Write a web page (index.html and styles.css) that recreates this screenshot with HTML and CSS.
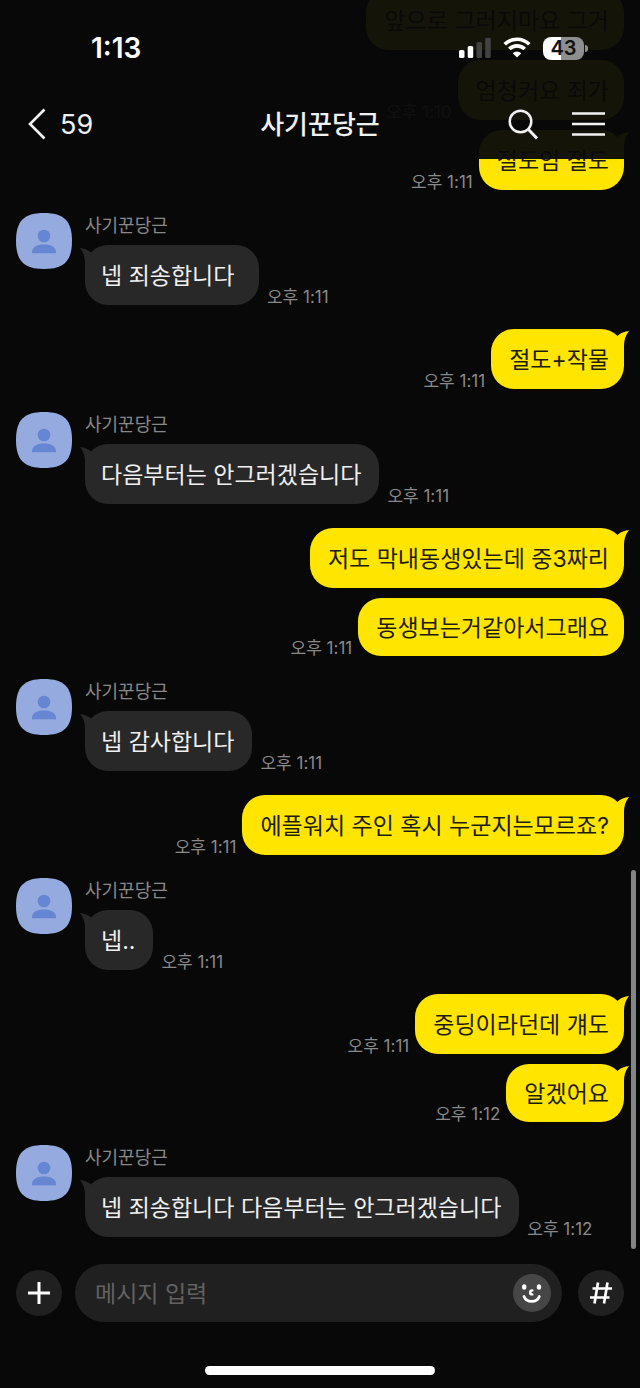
FILE: index.html
```html
<!DOCTYPE html>
<html lang="ko">
<head>
<meta charset="utf-8">
<meta name="viewport" content="width=device-width, initial-scale=1">
<title>사기꾼당근</title>
<link rel="stylesheet" href="styles.css">
</head>
<body>
<svg class="defs" aria-hidden="true">
  <symbol id="tail-right" viewBox="0 0 17 20"><path d="M5.700 4.700Q10.500 0.500 17 0Q12 6 12 15V20H0V8Z"/></symbol>
  <symbol id="tail-left" viewBox="0 0 17 20"><path d="M11.300 4.700Q6.500 0.500 0 0Q5 6 5 15V20H17V8Z"/></symbol>
  <symbol id="avatar" viewBox="0 0 56 56">
    <path fill="#95aade" d="M28 0C48 0 56 8 56 28S48 56 28 56 0 48 0 28 8 0 28 0Z"/>
    <circle cx="28" cy="23" r="6.300" fill="#6685d2"/>
    <path fill="#6685d2" d="M16 40.200V39C16 34 21 31.500 28 31.500S40 34 40 39V40.200Z"/>
  </symbol>
</svg>

<header class="top">
  <div class="status">
    <span class="clock">1:13</span>
    <div class="indicators">
      <svg width="32" height="22" viewBox="0 0 32 22" fill="#fff">
        <rect x="0" y="13" width="5.500" height="8" rx="1.500"/>
        <rect x="8.700" y="9" width="5.500" height="12" rx="1.500"/>
        <rect x="17.500" y="5" width="5.500" height="16" rx="1.500" fill="#424242"/>
        <rect x="26.200" y="0.800" width="5.500" height="20.200" rx="1.500" fill="#424242"/>
      </svg>
      <svg width="28" height="22" viewBox="0 0 28 22">
        <g fill="none" stroke="#fff" stroke-width="3.600">
          <path d="M1.700 7.300A17.500 17.500 0 0 1 26.300 7.300"/>
          <path d="M6.300 12A11 11 0 0 1 21.700 12"/>
        </g>
        <path fill="#fff" d="M9.700 16.200A6.200 6.200 0 0 1 18.300 16.200L14 20.600Z"/>
      </svg>
      <div class="battery"><span class="battery-level">43</span><i class="battery-tip"></i></div>
    </div>
  </div>
  <nav class="nav">
    <button class="back" type="button" aria-label="뒤로, 59">
      <svg width="18" height="32" viewBox="0 0 18 32"><path d="M16.500 1.500L2 16L16.500 30.500" fill="none" stroke="#f2f2f2" stroke-width="2.600"/></svg>
      <span>59</span>
    </button>
    <h1 class="title">사기꾼당근</h1>
    <div class="tools">
      <button type="button" aria-label="검색">
        <svg width="30" height="32" viewBox="0 0 30 32" fill="none" stroke="#f2f2f2"><circle cx="12.500" cy="13.500" r="10.800" stroke-width="2.500"/><path d="M20 21L29 30.500" stroke-width="3"/></svg>
      </button>
      <button type="button" aria-label="메뉴">
        <svg width="33" height="32" viewBox="0 0 33 32"><path d="M0 5.500H33M0 16H33M0 26.500H33" fill="none" stroke="#f2f2f2" stroke-width="2.600"/></svg>
      </button>
    </div>
  </nav>
</header>

<main class="chat">
  <section class="sent">
    <div class="line"><p class="bubble">앞으로 그러지마요 그거</p></div>
    <div class="line"><time>오후 1:10</time><p class="bubble">엄청커요 죄가</p></div>
    <div class="line"><time>오후 1:11</time><p class="bubble">절도임 절도<svg class="tail"><use href="#tail-right"/></svg></p></div>
  </section>
  <section class="received">
    <svg class="avatar"><use href="#avatar"/></svg>
    <div class="body"><h2 class="name">사기꾼당근</h2>
      <div class="line"><p class="bubble">넵 죄송합니다&nbsp;<svg class="tail"><use href="#tail-left"/></svg></p><time>오후 1:11</time></div></div>
  </section>
  <section class="sent">
    <div class="line"><time>오후 1:11</time><p class="bubble">절도+작물<svg class="tail"><use href="#tail-right"/></svg></p></div>
  </section>
  <section class="received">
    <svg class="avatar"><use href="#avatar"/></svg>
    <div class="body"><h2 class="name">사기꾼당근</h2>
      <div class="line"><p class="bubble">다음부터는 안그러겠습니다<svg class="tail"><use href="#tail-left"/></svg></p><time>오후 1:11</time></div></div>
  </section>
  <section class="sent">
    <div class="line"><p class="bubble">저도 막내동생있는데 중3짜리<svg class="tail"><use href="#tail-right"/></svg></p></div>
    <div class="line"><time>오후 1:11</time><p class="bubble short">동생보는거같아서그래요</p></div>
  </section>
  <section class="received">
    <svg class="avatar"><use href="#avatar"/></svg>
    <div class="body"><h2 class="name">사기꾼당근</h2>
      <div class="line"><p class="bubble">넵 감사합니다<svg class="tail"><use href="#tail-left"/></svg></p><time>오후 1:11</time></div></div>
  </section>
  <section class="sent">
    <div class="line"><time>오후 1:11</time><p class="bubble">에플워치 주인 혹시 누군지는모르죠?<svg class="tail"><use href="#tail-right"/></svg></p></div>
  </section>
  <section class="received">
    <svg class="avatar"><use href="#avatar"/></svg>
    <div class="body"><h2 class="name">사기꾼당근</h2>
      <div class="line"><p class="bubble">넵..<svg class="tail"><use href="#tail-left"/></svg></p><time>오후 1:11</time></div></div>
  </section>
  <section class="sent">
    <div class="line"><time>오후 1:11</time><p class="bubble">중딩이라던데 걔도<svg class="tail"><use href="#tail-right"/></svg></p></div>
    <div class="line"><time>오후 1:12</time><p class="bubble short">알겠어요<svg class="tail"><use href="#tail-right"/></svg></p></div>
  </section>
  <section class="received">
    <svg class="avatar"><use href="#avatar"/></svg>
    <div class="body"><h2 class="name">사기꾼당근</h2>
      <div class="line"><p class="bubble">넵 죄송합니다 다음부터는 안그러겠습니다<svg class="tail"><use href="#tail-left"/></svg></p><time>오후 1:12</time></div></div>
  </section>
  <div class="scrollbar"></div>
</main>

<form class="composer">
  <button class="round" type="button" aria-label="추가">
    <svg width="22" height="22" viewBox="0 0 22 22"><path d="M0 11H22M11 0V22" stroke="#fff" stroke-width="3"/></svg>
  </button>
  <div class="field">
    <input class="entry" type="text" placeholder="메시지 입력" aria-label="메시지 입력">
    <button class="sticker" type="button" aria-label="이모티콘">
      <svg width="22" height="22" viewBox="0 0 22 22" fill="none" stroke="#fff" stroke-linecap="round">
        <ellipse cx="3.200" cy="5" rx="2.200" ry="2.800" fill="#fff" stroke="none"/>
        <ellipse cx="18" cy="5" rx="2.200" ry="2.800" fill="#fff" stroke="none"/>
        <path d="M11.300 8.400C8.500 8.400 8.500 12.400 11.300 12.400" stroke-width="2.400"/>
        <path d="M3 14.500C5.500 21 16 21 18.300 14.500" stroke-width="2.800"/>
      </svg>
    </button>
  </div>
  <button class="round" type="button" aria-label="샵검색">
    <svg width="24" height="22" viewBox="0 0 24 22"><path d="M3.500 6.500H23M1 15.500H20.500M9 0.500L5.500 21.500M18.500 0.500L15 21.500" fill="none" stroke="#fff" stroke-width="2.700"/></svg>
  </button>
</form>
<div class="home"></div>
</body>
</html>
```
FILE: styles.css
```css
* { box-sizing: border-box; }

body {
  margin: 0;
  height: 100vh;
  display: flex;
  flex-direction: column;
  position: relative;
  overflow: hidden;
  background: #080808;
  color: #f0f0f0;
  font-family: Inter, "Noto Sans CJK KR", sans-serif;
}

h1, h2, p { margin: 0; font-weight: 400; }

button {
  padding: 0;
  border: 0;
  background: none;
  color: inherit;
  font: inherit;
  display: flex;
  align-items: center;
  justify-content: center;
}

svg { display: block; flex: none; }
.defs { position: absolute; width: 0; height: 0; }

/* Translucent header laid over the scrolled conversation */
.top {
  position: absolute;
  inset: 0 0 auto;
  z-index: 2;
  padding-bottom: 7px;
  background: rgba(8, 8, 8, .95);
}

.status {
  height: 96px;
  padding: 0 52px 0 91px;
  display: flex;
  align-items: center;
  justify-content: space-between;
}

.clock { font-size: 28px; font-weight: 600; color: #fff; }
.indicators { display: flex; align-items: center; gap: 12px; }

.battery { display: flex; align-items: center; gap: 1px; }
.battery-level {
  width: 41px;
  height: 23px;
  border-radius: 8px;
  background: linear-gradient(90deg, #fff 43%, #8e8e8e 43%);
  color: #111;
  font-size: 20px;
  font-weight: 600;
  line-height: 23px;
  text-align: center;
}
.battery-tip { width: 3px; height: 7px; border-radius: 0 3px 3px 0; background: #8e8e8e; }

.nav {
  height: 56px;
  padding: 0 28px;
  display: grid;
  grid-template-columns: 1fr auto 1fr;
  align-items: center;
}
.back { justify-self: start; gap: 14px; font-size: 27px; }
.title { padding-top: 2px; font-size: 26px; font-weight: 500; line-height: 32px; }
.tools { justify-self: end; display: flex; gap: 34px; margin-right: 7px; }

.chat {
  flex: 1;
  min-height: 0;
  overflow: hidden;
  position: relative;
  display: flex;
  flex-direction: column;
  justify-content: flex-end;
  padding: 0 16px;
}

.sent { display: flex; flex-direction: column; gap: 10px; }
.received { display: flex; gap: 13px; margin: 23px 0 24px; }
.received:nth-last-child(2) { margin-bottom: 27px; }
.avatar { width: 56px; height: 56px; }
.name { padding-top: 1px; margin-bottom: 7px; font-size: 18px; line-height: 24px; color: #888; }

.line { display: flex; align-items: flex-end; gap: 8px; }
.line time { font-size: 17px; line-height: 16px; color: #8a8a8a; white-space: nowrap; }
.sent .line { justify-content: flex-end; gap: 6px; }

.bubble {
  position: relative;
  padding: 15px 18px 13px 16px;
  border-radius: 23px;
  background: #282828;
  font-size: 23px;
  line-height: 32px;
}
.sent .bubble { padding: 15px 15px 13px 18px; background: #ffe500; color: #1c1c10; }
.sent .bubble.short { padding-top: 14px; padding-bottom: 12px; }

.tail { position: absolute; width: 17px; height: 20px; }
.sent .tail { top: 2px; right: -5px; fill: #ffe500; }
.received .tail { top: 3px; left: -5px; fill: #282828; }

.scrollbar {
  position: absolute;
  right: 4px;
  bottom: 15px;
  width: 5px;
  height: 379px;
  border-radius: 3px;
  background: #858585;
}

.composer { display: flex; align-items: center; padding: 0 16px; }
.round { flex: none; width: 46px; height: 46px; border-radius: 50%; background: #202020; }
.field {
  flex: 1;
  min-width: 0;
  height: 58px;
  margin: 0 16px 0 13px;
  padding: 0 11px 0 20px;
  display: flex;
  align-items: center;
  border-radius: 29px;
  background: #202020;
}
.entry {
  flex: 1;
  min-width: 0;
  padding: 2px 0 0;
  border: 0;
  outline: 0;
  background: none;
  color: #f0f0f0;
  font: inherit;
  font-size: 23px;
  line-height: 32px;
}
.entry::placeholder { color: #626262; opacity: 1; }
.sticker { width: 38px; height: 38px; border-radius: 50%; background: #464646; }

.home {
  width: 36%;
  height: 9px;
  margin: 44px auto 13px;
  border-radius: 5px;
  background: #fff;
}
```
